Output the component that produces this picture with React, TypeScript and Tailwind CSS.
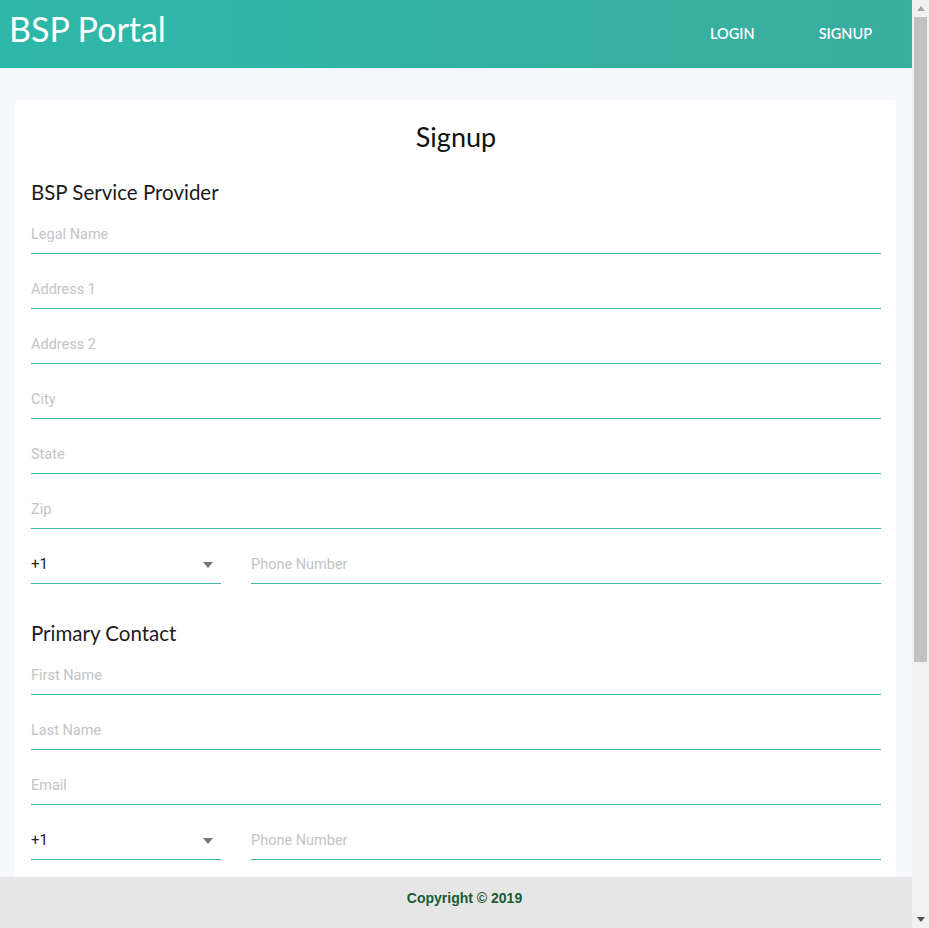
import React from "react";

function Field({ placeholder }: { placeholder: string }) {
  return (
    <div className="h-[38px] border-b border-[#3fb9a2] flex items-center">
      <span className="text-[14.5px] text-[#c4c4c4]" style={{ fontFamily: "Roboto, sans-serif" }}>
        {placeholder}
      </span>
    </div>
  );
}

function PhoneRow() {
  return (
    <div className="flex gap-[30px]">
      <div className="w-[190px] h-[38px] border-b border-[#3fb9a2] flex items-center justify-between pr-[8px]">
        <span className="text-[15px] text-[#222]" style={{ fontFamily: "Roboto, sans-serif" }}>+1</span>
        <svg width="10" height="6" viewBox="0 0 10 6">
          <path d="M0 0 L10 0 L5 6 Z" fill="#777" />
        </svg>
      </div>
      <div className="flex-1">
        <Field placeholder="Phone Number" />
      </div>
    </div>
  );
}

function Heading({ children }: { children: React.ReactNode }) {
  return (
    <div className="h-[24px] leading-[24px] text-[20.5px] text-[#1c1c1c] mb-[12px]" style={{ fontFamily: "Lato, sans-serif" }}>
      {children}
    </div>
  );
}

export default function App() {
  return (
    <div className="h-[928px] w-[929px] flex overflow-hidden">
      <div className="relative w-[912px] h-full flex flex-col bg-[#f7f8fc] overflow-hidden">
        <header className="h-[68px] shrink-0 flex items-center justify-between bg-gradient-to-r from-[#2eb8a9] to-[#39ad9f] text-white" style={{ fontFamily: "Lato, sans-serif" }}>
          <div className="pl-[9px] text-[34px] leading-none -mt-[10px]">BSP Portal</div>
          <nav className="flex items-center gap-[64px] pr-[40px] text-[14.5px] font-semibold">
            <span>LOGIN</span>
            <span>SIGNUP</span>
          </nav>
        </header>
        <main className="flex-1 pt-[32px] pl-[15px] pr-[16px]">
          <div className="bg-white rounded-[4px] pl-[16px] pr-[15px] pt-[19px] pb-[40px]">
            <div className="h-[36px] leading-[36px] text-center text-[27px] text-[#111] mb-[25px]" style={{ fontFamily: "Lato, sans-serif" }}>
              Signup
            </div>
            <Heading>BSP Service Provider</Heading>
            <div className="flex flex-col gap-[17px]">
              <Field placeholder="Legal Name" />
              <Field placeholder="Address 1" />
              <Field placeholder="Address 2" />
              <Field placeholder="City" />
              <Field placeholder="State" />
              <Field placeholder="Zip" />
              <PhoneRow />
            </div>
            <div className="mt-[37px]">
              <Heading>Primary Contact</Heading>
            </div>
            <div className="flex flex-col gap-[17px]">
              <Field placeholder="First Name" />
              <Field placeholder="Last Name" />
              <Field placeholder="Email" />
              <PhoneRow />
              <Field placeholder="Password" />
            </div>
          </div>
        </main>
        <footer className="absolute bottom-0 left-0 right-0 h-[51px] bg-[#e6e6e6] flex items-center justify-center pl-[17px] pb-[8px]">
          <span className="text-[14px] font-bold text-[#1a5c35]" style={{ fontFamily: "'Liberation Sans', Arial, sans-serif" }}>
            Copyright © 2019
          </span>
        </footer>
      </div>
      <div className="w-[17px] h-full bg-[#f1f1f1] flex flex-col items-center">
        <div className="h-[17px] w-full flex items-center justify-center">
          <svg width="8" height="5" viewBox="0 0 8 5"><path d="M0 5 L8 5 L4 0 Z" fill="#a3a3a3" /></svg>
        </div>
        <div className="w-[13px] h-[645px] bg-[#c1c1c1]" />
        <div className="flex-1" />
        <div className="h-[17px] w-full flex items-center justify-center">
          <svg width="8" height="5" viewBox="0 0 8 5"><path d="M0 0 L8 0 L4 5 Z" fill="#505050" /></svg>
        </div>
      </div>
    </div>
  );
}
